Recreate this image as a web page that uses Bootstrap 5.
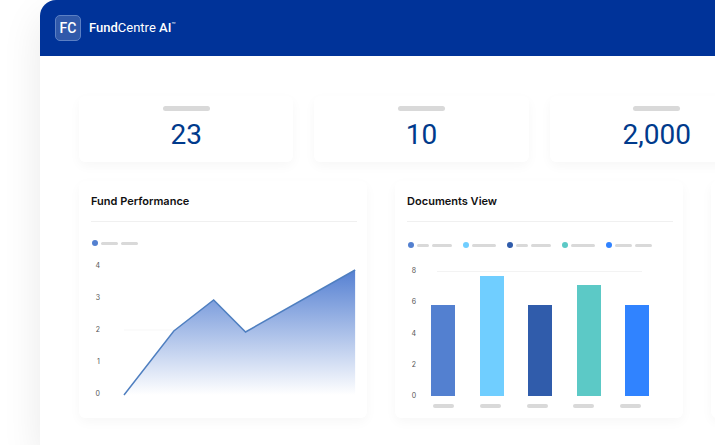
<!DOCTYPE html>
<html lang="en">
<head>
<meta charset="utf-8">
<meta name="viewport" content="width=device-width, initial-scale=1">
<title>FundCentre AI</title>
<link href="https://cdn.jsdelivr.net/npm/bootstrap@5.3.0/dist/css/bootstrap.min.css" rel="stylesheet">
<style>
  body { font-family: Inter, sans-serif; overflow: hidden; background: #fff; }
  .app-window { margin-left: 40px; min-height: 100vh; border-radius: 16px 0 0 0; background: #fff; box-shadow: 0 16px 40px rgba(0,0,0,.09); overflow: hidden; }
  .app-bar { height: 56px; padding: 0 15px; background: #003399; }
  .brand { gap: 8px; font: 400 13px/16px Roboto, sans-serif; color: #fff; }
  .brand b { font-weight: 500; }
  .brand sup { font-size: 7px; top: -5px; }
  .brand-mark { width: 26px; height: 26px; border: 1px solid #5c80c4; border-radius: 5px; background: #3059aa; font: 500 14px/24px Roboto, sans-serif; }
  .board { padding: 40px 0 0 39px; }
  .stats { gap: 21px; margin-bottom: 19px; }
  .charts { gap: 28px; }
  .panel { border: 0; border-radius: 6px; box-shadow: 0 4px 12px rgba(0,0,0,.035); }
  .stat { flex: 0 0 33.7%; height: 66px; padding-top: 10px; }
  .stat-value { margin-top: 8px; font: 400 28px/32px Roboto, sans-serif; color: #003a8c; }
  .chart-panel { flex: 0 0 45.3%; height: 237px; padding: 12px 10px 0 12px; }
  .chart-title { margin: 0; padding-bottom: 12px; font-size: 11px; line-height: 16px; font-weight: 600; color: #111; border-bottom: 1px solid #f0f0f0; }
  .ph { display: block; height: 3px; border-radius: 2px; background: #d9d9d9; }
  .ph-lg { width: 47px; height: 5px; border-radius: 3px; }
  .ph-tick { width: 21px; height: 4px; }
  .w12 { width: 12px; } .w16 { width: 17px; } .w20 { width: 20px; } .w24 { width: 24px; }
  .legend-row { gap: 11px; padding: 20px 0 0 1px; }
  .line-legend { padding-top: 18px; }
  .legend-item { gap: 3px; }
  .dot { width: 6px; height: 6px; border-radius: 50%; }
  .axis { width: 9px; font-size: 7px; line-height: 8px; color: #555; text-align: right; }
  .line-area { gap: 24px; margin-top: 16px; padding-right: 2px; }
  .line-area .axis { height: 136px; }
  .line-plot { height: 128px; margin-top: 4px; min-width: 0; }
  .bar-area { gap: 15px; margin-top: 19px; padding-right: 24px; }
  .bar-area .axis { height: 133px; }
  .bar-plot { height: 125px; margin-top: 4px; background: linear-gradient(#f3f3f3, #f3f3f3) 6px 0 / 205px 1px no-repeat; }
  .bar { width: 24px; }
  .ticks { margin-top: 4px; padding: 0 32px 0 26px; }
  .c1 { background: #5380d0; } .c2 { background: #70ceff; } .c3 { background: #305cab; } .c4 { background: #5cc9c6; } .c5 { background: #3083ff; }
</style>
</head>
<body>
<div class="app-window">
  <header class="app-bar d-flex align-items-center">
    <a href="#" class="brand d-flex align-items-center text-decoration-none">
      <span class="brand-mark text-center">FC</span>
      <span><b>Fund</b>Centre <b>AI</b><sup>™</sup></span>
    </a>
  </header>
  <main class="board">
    <section class="stats d-flex">
      <div class="panel card stat align-items-center"><span class="ph ph-lg"></span><div class="stat-value">23</div></div>
      <div class="panel card stat align-items-center"><span class="ph ph-lg"></span><div class="stat-value">10</div></div>
      <div class="panel card stat align-items-center"><span class="ph ph-lg"></span><div class="stat-value">2,000</div></div>
    </section>
    <section class="charts d-flex">
      <article class="panel card chart-panel">
        <h2 class="chart-title">Fund Performance</h2>
        <div class="legend-row line-legend d-flex"><div class="legend-item d-flex align-items-center"><span class="dot c1"></span><span class="ph w16"></span><span class="ph w16"></span></div></div>
        <div class="line-area d-flex">
          <div class="axis d-flex flex-column justify-content-between"><span>4</span><span>3</span><span>2</span><span>1</span><span>0</span></div>
          <svg class="line-plot flex-fill" viewBox="0 0 232 128" preserveAspectRatio="none" overflow="visible" aria-label="Fund performance">
            <defs><linearGradient id="areaFill" x1="0" y1="0" x2="0" y2="1"><stop offset="0" stop-color="#5580d2"/><stop offset="1" stop-color="#fff"/></linearGradient></defs>
            <path d="M0 64H232M0 128H232" stroke="#f7f7f7" fill="none"/>
            <path d="M0 129L50 65L90 34L122 66L232 4V129Z" fill="url(#areaFill)"/>
            <path d="M0 129L50 65L90 34L122 66L232 4" fill="none" stroke="#4f7fc0" stroke-width="1.5"/>
          </svg>
        </div>
      </article>
      <article class="panel card chart-panel">
        <h2 class="chart-title">Documents View</h2>
        <div class="legend-row d-flex">
          <div class="legend-item d-flex align-items-center"><span class="dot c1"></span><span class="ph w12"></span><span class="ph w20"></span></div>
          <div class="legend-item d-flex align-items-center"><span class="dot c2"></span><span class="ph w24"></span></div>
          <div class="legend-item d-flex align-items-center"><span class="dot c3"></span><span class="ph w12"></span><span class="ph w20"></span></div>
          <div class="legend-item d-flex align-items-center"><span class="dot c4"></span><span class="ph w24"></span></div>
          <div class="legend-item d-flex align-items-center"><span class="dot c5"></span><span class="ph w16"></span><span class="ph w16"></span></div>
        </div>
        <div class="bar-area d-flex">
          <div class="axis d-flex flex-column justify-content-between"><span>8</span><span>6</span><span>4</span><span>2</span><span>0</span></div>
          <div class="bar-plot flex-fill d-flex align-items-end justify-content-between">
            <div class="bar c1" style="height:73%"></div><div class="bar c2" style="height:96%"></div><div class="bar c3" style="height:73%"></div><div class="bar c4" style="height:89%"></div><div class="bar c5" style="height:73%"></div>
          </div>
        </div>
        <div class="ticks d-flex justify-content-between"><span class="ph ph-tick"></span><span class="ph ph-tick"></span><span class="ph ph-tick"></span><span class="ph ph-tick"></span><span class="ph ph-tick"></span></div>
      </article>
      <article class="panel card chart-panel"></article>
    </section>
  </main>
</div>
<script src="https://cdn.jsdelivr.net/npm/bootstrap@5.3.0/dist/js/bootstrap.bundle.min.js"></script>
</body>
</html>
